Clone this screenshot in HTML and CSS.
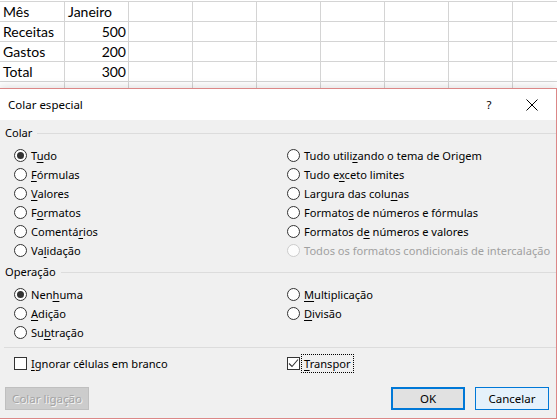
FILE: index.html
```html
<!DOCTYPE html>
<html lang="pt">
<head>
<meta charset="utf-8">
<title>Colar especial</title>
<link rel="stylesheet" href="styles.css">
</head>
<body>
<div class="sheet">
  <div class="row">
    <div class="cell">Mês</div><div class="cell">Janeiro</div><div class="cell"></div><div class="cell"></div><div class="cell"></div><div class="cell"></div><div class="cell"></div><div class="cell"></div><div class="cell"></div>
  </div>
  <div class="row">
    <div class="cell">Receitas</div><div class="cell num">500</div><div class="cell"></div><div class="cell"></div><div class="cell"></div><div class="cell"></div><div class="cell"></div><div class="cell"></div><div class="cell"></div>
  </div>
  <div class="row">
    <div class="cell">Gastos</div><div class="cell num">200</div><div class="cell"></div><div class="cell"></div><div class="cell"></div><div class="cell"></div><div class="cell"></div><div class="cell"></div><div class="cell"></div>
  </div>
  <div class="row">
    <div class="cell">Total</div><div class="cell num">300</div><div class="cell"></div><div class="cell"></div><div class="cell"></div><div class="cell"></div><div class="cell"></div><div class="cell"></div><div class="cell"></div>
  </div>
  <div class="row">
    <div class="cell"></div><div class="cell"></div><div class="cell"></div><div class="cell"></div><div class="cell"></div><div class="cell"></div><div class="cell"></div><div class="cell"></div><div class="cell"></div>
  </div>
</div>

<div class="dialog">
  <div class="titlebar">
    <span class="title">Colar especial</span>
    <span class="help">?</span>
    <span class="close">
      <svg width="12" height="12" viewBox="0 0 12 12"><path d="M0.5 0.5 L11.5 11.5 M11.5 0.5 L0.5 11.5" stroke="#000" stroke-width="1" fill="none"/></svg>
    </span>
  </div>
  <div class="body">
    <div class="group-label"><span>Colar</span><i class="rule"></i></div>
    <div class="options">
      <label class="opt"><span class="radio on"></span><span>T<u>u</u>do</span></label>
      <label class="opt"><span class="radio"></span><span>Tudo utili<u>z</u>ando o tema de Origem</span></label>
      <label class="opt"><span class="radio"></span><span><u>F</u>órmulas</span></label>
      <label class="opt"><span class="radio"></span><span>Tudo e<u>x</u>ceto limites</span></label>
      <label class="opt"><span class="radio"></span><span><u>V</u>alores</span></label>
      <label class="opt"><span class="radio"></span><span>Largura das colu<u>n</u>as</span></label>
      <label class="opt"><span class="radio"></span><span>F<u>o</u>rmatos</span></label>
      <label class="opt"><span class="radio"></span><span>Formato<u>s</u> de números e fórmulas</span></label>
      <label class="opt"><span class="radio"></span><span>Comentá<u>r</u>ios</span></label>
      <label class="opt"><span class="radio"></span><span>Formatos d<u>e</u> números e valores</span></label>
      <label class="opt"><span class="radio"></span><span>Va<u>l</u>idação</span></label>
      <label class="opt disabled"><span class="radio"></span><span>Todos os formatos condicionais de intercalação</span></label>
    </div>
    <div class="group-label op"><span>Operação</span><i class="rule"></i></div>
    <div class="options">
      <label class="opt"><span class="radio on"></span><span>Nen<u>h</u>uma</span></label>
      <label class="opt"><span class="radio"></span><span><u>M</u>ultiplicação</span></label>
      <label class="opt"><span class="radio"></span><span><u>A</u>dição</span></label>
      <label class="opt"><span class="radio"></span><span><u>D</u>ivisão</span></label>
      <label class="opt"><span class="radio"></span><span>Su<u>b</u>tração</span></label>
      <span></span>
    </div>
    <i class="sep"></i>
    <div class="options checks">
      <label class="opt"><span class="check"></span><span><u>I</u>gnorar células em branco</span></label>
      <label class="opt"><span class="check">
        <svg width="11" height="11" viewBox="0 0 11 11"><path d="M1 5.5 L4 8.5 L10 1.5" stroke="#333" stroke-width="1.1" fill="none"/></svg>
      </span><span class="focus"><u>T</u>ranspor</span></label>
    </div>
    <div class="buttons">
      <button class="btn disabled-btn" type="button">Colar ligação</button>
      <span class="spacer"></span>
      <button class="btn ok" type="button">OK</button>
      <button class="btn cancel" type="button">Cancelar</button>
    </div>
  </div>
</div>
</body>
</html>
```

FILE: styles.css
```css
html, body {
  margin: 0;
  padding: 0;
}
body {
  width: 557px;
  height: 419px;
  overflow: hidden;
  position: relative;
  background: #fff;
  font-family: "Noto Sans", "Open Sans", sans-serif;
}

/* spreadsheet */
.sheet {
  margin-top: 1px;
  border-top: 1px solid #d4d4d4;
  font-family: Lato, "Liberation Sans", sans-serif;
  font-size: 14px;
  color: #000;
}
.row {
  display: grid;
  grid-template-columns: 65px repeat(8, 64px);
  height: 20px;
}
.cell {
  box-sizing: border-box;
  height: 20px;
  border-right: 1px solid #d4d4d4;
  border-bottom: 1px solid #d4d4d4;
  padding: 0 2px 0 3px;
  line-height: 20px;
  white-space: nowrap;
}
.cell.num {
  text-align: right;
}

/* dialog */
.dialog {
  position: absolute;
  left: -1px;
  top: 88px;
  width: 556px;
  height: 329px;
  border: 1px solid #dc8787;
  background: #f0f0f0;
  box-shadow: 0 -2px 8px rgba(0, 0, 0, 0.12);
  font-size: 11.1px;
  color: #000;
  display: flex;
  flex-direction: column;
}
.titlebar {
  height: 31px;
  background: #fff;
  display: flex;
  align-items: center;
  padding-left: 8px;
  font-size: 11.5px;
}
.title {
  flex: 1;
}
.help {
  width: 12px;
  text-align: center;
  margin-right: 31px;
}
.close {
  width: 12px;
  height: 12px;
  margin-right: 18px;
  display: flex;
}
.body {
  padding: 6px 0 0 5px;
  display: flex;
  flex-direction: column;
}
.group-label {
  height: 14px;
  line-height: 14px;
  display: flex;
  align-items: center;
  gap: 5px;
}
.group-label.op {
  margin-top: 5px;
}
.rule {
  flex: 1;
  height: 1px;
  background: #dcdcdc;
}
.options {
  display: grid;
  grid-template-columns: 273px 1fr;
  padding-left: 9px;
  margin-top: 6px;
}
.opt {
  height: 19px;
  display: flex;
  align-items: center;
  white-space: nowrap;
}
.opt u {
  text-decoration: underline;
  text-underline-offset: 2px;
}
.radio {
  box-sizing: border-box;
  width: 13px;
  height: 13px;
  border: 1px solid #333;
  border-radius: 50%;
  background: #fff;
  margin-right: 4px;
  display: flex;
  align-items: center;
  justify-content: center;
}
.radio.on::after {
  content: "";
  width: 7px;
  height: 7px;
  border-radius: 50%;
  background: #333;
}
.opt.disabled {
  color: #a0a0a0;
}
.opt.disabled .radio {
  border-color: #cccccc;
  background: #fcfcfc;
}
.sep {
  height: 1px;
  background: #dcdcdc;
  margin-top: 5px;
  margin-left: -1px;
}
.checks {
  margin-top: 6px;
}
.check {
  box-sizing: border-box;
  width: 13px;
  height: 13px;
  border: 1px solid #333;
  background: #fff;
  margin-right: 4px;
  display: flex;
  align-items: center;
  justify-content: center;
}
.focus {
  outline: 1px dotted #000;
  outline-offset: 1px;
  padding: 0 1px;
  margin-left: -1px;
}
.buttons {
  display: flex;
  margin-top: 14px;
  padding-right: 7px;
}
.spacer {
  flex: 1;
}
.btn {
  box-sizing: border-box;
  height: 23px;
  width: 74px;
  font-family: inherit;
  font-size: 11.5px;
  padding: 0;
  margin: 0;
  color: #000;
}
.disabled-btn {
  width: 84px;
  background: #cccccc;
  border: 1px solid #bfbfbf;
  color: #a3a3a3;
  text-shadow: 1px 1px 0 #f4f4f4;
}
.ok {
  background: #e1e1e1;
  border: 2px solid #0078d7;
  margin-right: 10px;
}
.cancel {
  background: #e5f1fb;
  border: 1px solid #0078d7;
}
```
